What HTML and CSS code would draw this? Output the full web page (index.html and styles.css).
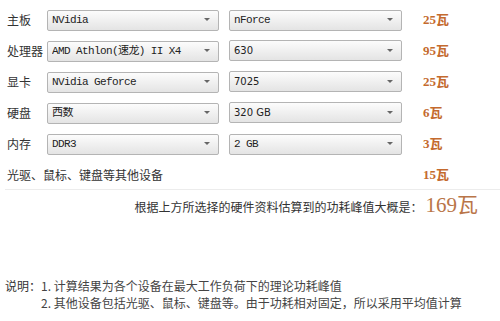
FILE: index.html
```html
<!DOCTYPE html>
<html lang="zh-CN">
<head>
    <meta charset="UTF-8">
    <meta name="viewport" content="width=device-width, initial-scale=1.0">
    <title>功耗计算</title>
    <link rel="stylesheet" href="styles.css">
</head>
<body>
    <div class="calc">
        <div class="row">
            <span class="label">主板</span>
            <span class="pick first"><select class="mono"><option>NVidia</option></select></span>
            <span class="pick second"><select class="mono"><option>nForce</option></select></span>
            <span class="watt">25瓦</span>
        </div>
        <div class="row">
            <span class="label">处理器</span>
            <span class="pick first"><select class="mono"><option>AMD Athlon(速龙) II X4</option></select></span>
            <span class="pick second"><select class="num"><option>630</option></select></span>
            <span class="watt">95瓦</span>
        </div>
        <div class="row">
            <span class="label">显卡</span>
            <span class="pick first"><select class="mono"><option>NVidia Geforce</option></select></span>
            <span class="pick second"><select class="num"><option>7025</option></select></span>
            <span class="watt">25瓦</span>
        </div>
        <div class="row">
            <span class="label">硬盘</span>
            <span class="pick first"><select class="mono"><option>西数</option></select></span>
            <span class="pick second"><select class="num"><option>320 GB</option></select></span>
            <span class="watt">6瓦</span>
        </div>
        <div class="row">
            <span class="label">内存</span>
            <span class="pick first"><select class="mono"><option>DDR3</option></select></span>
            <span class="pick second"><select class="mono"><option>2 GB</option></select></span>
            <span class="watt">3瓦</span>
        </div>
        <div class="row other">
            <span class="other-label">光驱、鼠标、键盘等其他设备</span>
            <span class="watt">15瓦</span>
        </div>
        <div class="total">
            根据上方所选择的硬件资料估算到的功耗峰值大概是：<span class="total-value">169瓦</span>
        </div>
    </div>
    <div class="notes">
        <span class="notes-title">说明：</span>
        <div class="notes-list">
            <div>1. 计算结果为各个设备在最大工作负荷下的理论功耗峰值</div>
            <div>2. 其他设备包括光驱、鼠标、键盘等。由于功耗相对固定，所以采用平均值计算</div>
        </div>
    </div>
</body>
</html>
```

FILE: styles.css
```css
body {
    margin: 0;
    background: #fff;
    color: #333;
    font-family: "Noto Sans CJK SC", "Liberation Sans", sans-serif;
    font-size: 12px;
}
.calc {
    padding-top: 9px;
}
.row {
    display: flex;
    align-items: center;
    height: 21px;
    margin-bottom: 10px;
    padding-left: 7px;
}
.label {
    width: 40px;
    line-height: 21px;
}
.pick {
    position: relative;
    display: block;
    height: 21px;
}
.pick.first {
    width: 172px;
}
.pick.second {
    width: 173px;
    margin-left: 10px;
}
.pick::after {
    content: "";
    position: absolute;
    right: 9px;
    top: 9px;
    border-left: 3px solid transparent;
    border-right: 3px solid transparent;
    border-top: 3px solid #666;
}
select {
    -webkit-appearance: none;
    appearance: none;
    box-sizing: border-box;
    width: 100%;
    height: 21px;
    margin: 0;
    padding: 0 0 0 4px;
    border: 1px solid #b4b4b4;
    border-radius: 2px;
    background: linear-gradient(#fcfcfc, #e4e4e4);
    color: #222;
    outline: none;
}
select.mono {
    font-family: "Liberation Mono", "Noto Sans CJK SC", monospace;
    font-size: 11px;
    letter-spacing: -0.6px;
}
select.num {
    font-family: "DejaVu Sans", "Liberation Sans", sans-serif;
    font-size: 10px;
}
.watt {
    margin-left: 21px;
    margin-top: -3px;
    color: #c46a2e;
    font-weight: bold;
    font-family: "Liberation Serif", "Noto Sans CJK SC", serif;
    font-size: 13px;
}
.other {
    margin-bottom: 4px;
}
.other-label {
    width: 395px;
}
.total {
    display: flex;
    justify-content: flex-end;
    align-items: baseline;
    margin-left: 5px;
    padding: 3px 22px 0 0;
    border-top: 1px solid #ececec;
    line-height: 24px;
}
.total-value {
    margin-left: 3px;
    color: #b97548;
    font-family: "Liberation Serif", "Noto Sans CJK SC", serif;
    font-size: 21px;
}
.notes {
    display: flex;
    margin-top: 58px;
    padding-left: 5px;
    line-height: 17px;
}
.notes-list {
    color: #444;
}
```
